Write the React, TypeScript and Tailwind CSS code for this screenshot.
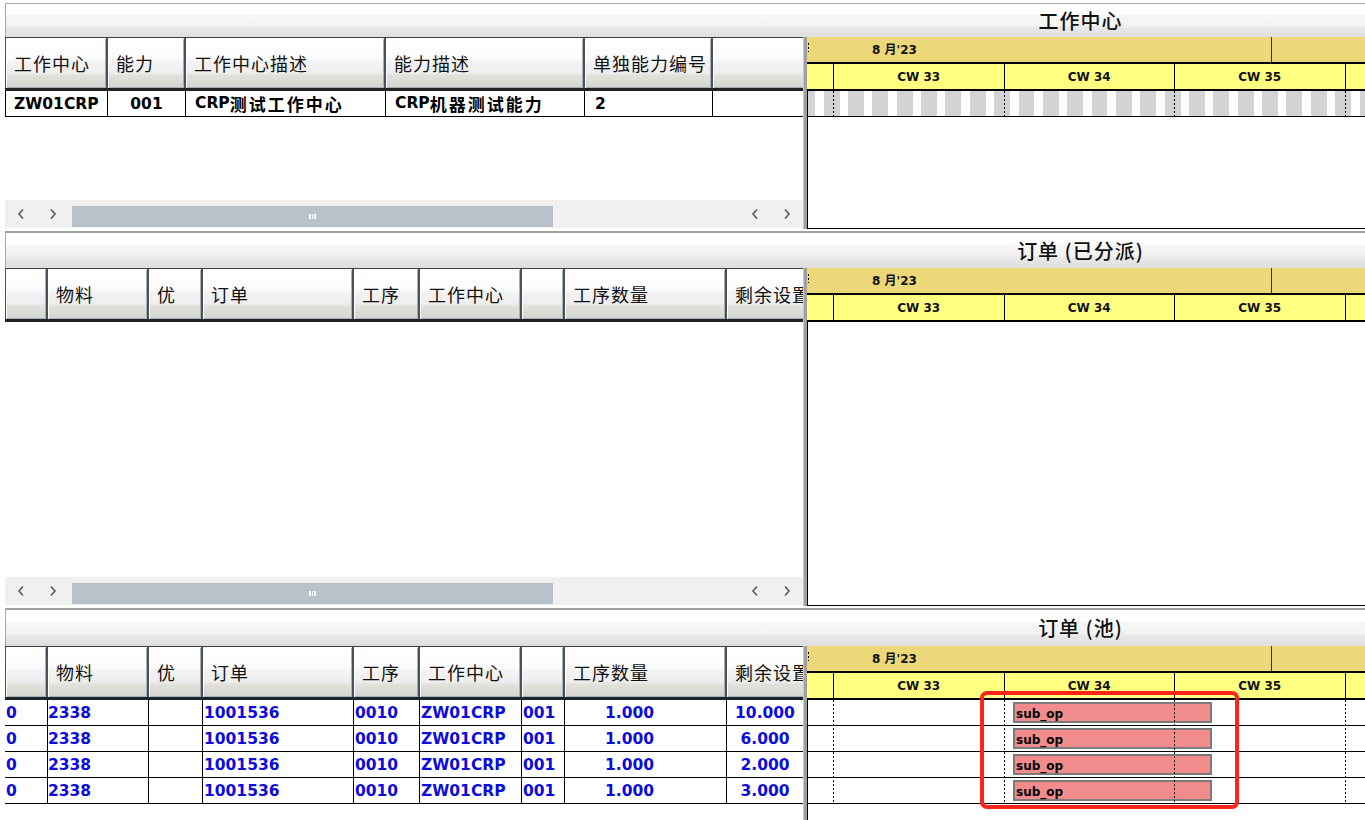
import React from "react";

const WEEK = 170.5;
const DAY = WEEK / 7;
const BX0 = 25; // Monday CW33 offset inside gantt body content

const TITLE_BG =
  "bg-[linear-gradient(to_bottom,#ffffff_0%,#ffffff_33%,#f6f6f6_34%,#f2f2f2_66%,#e9e9e9_70%,#dedede_100%)]";
const HEAD_BG =
  "bg-[linear-gradient(to_bottom,#ffffff_0%,#fcfcfc_42%,#f3f3f3_46%,#eeeeee_70%,#e2e2dd_74%,#d5d5cf_100%)]";
const DOTTED_V =
  "bg-[repeating-linear-gradient(to_bottom,#000000_0px,#000000_2px,transparent_2px,transparent_4px)]";
const CJK = "font-['Noto_Sans_CJK_SC',sans-serif]";

type HCol = { w: string; label: string };

const COLS1: HCol[] = [
  { w: "w-[100px]", label: "工作中心" },
  { w: "w-[76px]", label: "能力" },
  { w: "w-[198px]", label: "工作中心描述" },
  { w: "w-[197px]", label: "能力描述" },
  { w: "w-[126px]", label: "单独能力编号" },
  { w: "w-[200px]", label: "" },
];

const COLS2: HCol[] = [
  { w: "w-[40px]", label: "" },
  { w: "w-[99px]", label: "物料" },
  { w: "w-[52px]", label: "优" },
  { w: "w-[149px]", label: "订单" },
  { w: "w-[64px]", label: "工序" },
  { w: "w-[100px]", label: "工作中心" },
  { w: "w-[41px]", label: "" },
  { w: "w-[160px]", label: "工序数量" },
  { w: "w-[200px]", label: "剩余设置" },
];

const POOL = ["10.000", "6.000", "2.000", "3.000"];

function TitleBar({ title, h }: { title: string; h: string }) {
  return (
    <div className={`${h} ml-[5px] flex shrink-0 border-l border-[#a8a8a8] ${TITLE_BG}`}>
      <div className="w-[790px] shrink-0" />
      <div className={`flex-1 flex items-center justify-center text-[20px] font-medium tracking-[1px] text-[#111] ${CJK}`}>
        {title}
      </div>
    </div>
  );
}

function HeaderRow({ cols }: { cols: HCol[] }) {
  return (
    <div className="flex h-[54px] shrink-0 overflow-hidden bg-[#46525d] border-t border-[#36414b] border-b-[3px] border-b-[#1f2428] pl-[1px] gap-[2px]">
      {cols.map((c, i) => (
        <div
          key={i}
          className={`${c.w} shrink-0 h-full flex items-center pl-[8px] ${HEAD_BG} shadow-[inset_1px_1px_0_#ffffff,inset_-1px_-1px_0_#a7aeb4] text-[18px] tracking-[1px] text-[#111] whitespace-nowrap overflow-hidden ${CJK}`}
        >
          {c.label}
        </div>
      ))}
    </div>
  );
}

function Chevron({ dir }: { dir: "l" | "r" }) {
  return (
    <svg width="8" height="12" viewBox="0 0 8 12">
      <polyline
        points={dir === "l" ? "6,1.5 2,6 6,10.5" : "2,1.5 6,6 2,10.5"}
        fill="none"
        stroke="#555a62"
        strokeWidth="1.6"
      />
    </svg>
  );
}

function ScrollBar() {
  return (
    <div className="h-[28px] shrink-0 bg-[#f0f0f0] flex">
      <div className="w-[32px] flex items-center justify-center">
        <Chevron dir="l" />
      </div>
      <div className="w-[32px] flex items-center justify-center">
        <Chevron dir="r" />
      </div>
      <div className="ml-[3px] mt-[6px] w-[481px] h-[21px] bg-[#b8c2cb] flex items-center justify-center gap-[1px]">
        <span className="w-[1.5px] h-[5px] bg-white" />
        <span className="w-[1.5px] h-[5px] bg-white" />
        <span className="w-[1.5px] h-[5px] bg-white" />
      </div>
      <div className="flex-1" />
      <div className="w-[32px] flex items-center justify-center">
        <Chevron dir="l" />
      </div>
      <div className="w-[32px] flex items-center justify-center">
        <Chevron dir="r" />
      </div>
    </div>
  );
}

function GanttHeader() {
  return (
    <div className="shrink-0 text-[12px] font-bold text-[#111]">
      <div className="relative flex h-[27px] bg-[#ecd878] border-b-2 border-black">
        <div className="w-[464px] shrink-0 flex items-center pl-[65px]">8 月'23</div>
        <div className="flex-1 border-l border-[#333333]" />
        <div className={`absolute left-[1px] top-[6px] h-[9px] w-[1px] ${DOTTED_V}`} />
      </div>
      <div className="flex h-[27px] bg-[#ffff80] border-b-2 border-black">
        <div className="w-[26px] shrink-0" />
        {["CW 33", "CW 34", "CW 35"].map((w) => (
          <div key={w} className="w-[170.5px] shrink-0 border-l border-black flex items-center justify-center pt-[1px]">
            {w}
          </div>
        ))}
        <div className="flex-1 border-l border-black" />
      </div>
    </div>
  );
}

function WeekLines() {
  return (
    <>
      {[0, 1, 2, 3].map((k) => (
        <div
          key={k}
          className={`absolute top-0 h-full w-[1px] ${DOTTED_V}`}
          style={{ left: BX0 + k * WEEK }}
        />
      ))}
    </>
  );
}

function Stripes() {
  const days = Array.from({ length: 26 }, (_, i) => i - 2);
  return (
    <div className="relative h-[26px] border-b border-black bg-[#d3d3d3] overflow-hidden">
      {days.map((d) => (
        <div
          key={d}
          className="absolute top-0 h-full w-[8.5px] bg-white"
          style={{ left: BX0 + d * DAY + 6.5 }}
        />
      ))}
      <WeekLines />
    </div>
  );
}

function PanelBody({
  h,
  left,
  right,
  bottomBorder,
}: {
  h: string;
  left: React.ReactNode;
  right: React.ReactNode;
  bottomBorder: boolean;
}) {
  return (
    <div className={`${h} ml-[5px] flex shrink-0`}>
      <div className="w-[798px] shrink-0 flex flex-col overflow-hidden">{left}</div>
      <div className="w-[4px] shrink-0 bg-[#a0a0a0] border-l border-[#c8c8c8]" />
      <div className="flex-1 flex flex-col overflow-hidden">
        <GanttHeader />
        <div className={`flex-1 relative border-l border-black ${bottomBorder ? "border-b" : ""}`}>{right}</div>
      </div>
    </div>
  );
}

function Divider() {
  return (
    <>
      <div className="h-[2px] shrink-0" />
      <div className="h-[2px] shrink-0 ml-[5px] bg-[#a0a0a0]" />
    </>
  );
}

function CjkBold({ children }: { children: React.ReactNode }) {
  return <span className={`text-[17px] tracking-[2px] ${CJK}`}>{children}</span>;
}

export default function App() {
  return (
    <div className="relative w-[1365px] h-[820px] overflow-hidden bg-white flex flex-col font-['DejaVu_Sans','Noto_Sans_CJK_SC',sans-serif]">
      <div className="h-[3px] shrink-0" />
      <div className="ml-[5px] h-[1px] shrink-0 bg-[#a8a8a8]" />
      <TitleBar title="工作中心" h="h-[33px]" />
      <PanelBody
        h="h-[192px]"
        bottomBorder
        left={
          <>
            <HeaderRow cols={COLS1} />
            <div className="flex h-[26px] shrink-0 border-b border-black text-[15.5px] font-bold text-black">
              <div className="w-[103px] shrink-0 border-l border-r border-black flex items-center pl-[8px] pt-[2px]">ZW01CRP</div>
              <div className="w-[78px] shrink-0 border-r border-black flex items-center justify-center pt-[2px]">001</div>
              <div className="w-[200px] shrink-0 border-r border-black flex items-center pl-[9px] whitespace-nowrap">
                CRP<CjkBold>测试工作中心</CjkBold>
              </div>
              <div className="w-[199px] shrink-0 border-r border-black flex items-center pl-[9px] whitespace-nowrap">
                CRP<CjkBold>机器测试能力</CjkBold>
              </div>
              <div className="w-[128px] shrink-0 border-r border-black flex items-center pl-[10px] pt-[2px]">2</div>
              <div className="flex-1" />
            </div>
            <div className="flex-1" />
            <ScrollBar />
            <div className="h-[1px] shrink-0" />
          </>
        }
        right={<Stripes />}
      />
      <Divider />
      <TitleBar title="订单 (已分派)" h="h-[35px]" />
      <PanelBody
        h="h-[338px]"
        bottomBorder
        left={
          <>
            <HeaderRow cols={COLS2} />
            <div className="flex-1" />
            <ScrollBar />
            <div className="h-[1px] shrink-0" />
          </>
        }
        right={null}
      />
      <Divider />
      <TitleBar title="订单 (池)" h="h-[36px]" />
      <PanelBody
        h="flex-1"
        bottomBorder={false}
        left={
          <>
            <HeaderRow cols={COLS2} />
            {POOL.map((q, i) => (
              <div key={i} className="flex h-[26px] shrink-0 border-b border-black text-[15.5px] font-bold text-[#0c0cdc]">
                <div className="w-[43px] shrink-0 border-r border-black flex items-center pl-[1px] pt-[2px]">0</div>
                <div className="w-[101px] shrink-0 border-r border-black flex items-center pt-[2px]">2338</div>
                <div className="w-[54px] shrink-0 border-r border-black" />
                <div className="w-[151px] shrink-0 border-r border-black flex items-center pl-[1px] pt-[2px]">1001536</div>
                <div className="w-[66px] shrink-0 border-r border-black flex items-center pl-[1px] pt-[2px]">0010</div>
                <div className="w-[102px] shrink-0 border-r border-black flex items-center pl-[1px] pt-[2px]">ZW01CRP</div>
                <div className="w-[43px] shrink-0 border-r border-black flex items-center pl-[1px] pt-[2px]">001</div>
                <div className="w-[162px] shrink-0 border-r border-black flex items-center pl-[40px] pt-[2px]">1.000</div>
                <div className="w-[76px] shrink-0 flex items-center justify-center pt-[2px]">{q}</div>
              </div>
            ))}
          </>
        }
        right={
          <div className="relative">
            {POOL.map((q, i) => (
              <div key={i} className="relative h-[26px] border-b border-black">
                <div className="absolute left-[205px] top-[2px] h-[21px] w-[199px] bg-[#f28c8c] border-2 border-[#7b7b7b] flex items-center pl-[1px] pt-[2px] text-[12px] font-bold text-black leading-none">
                  sub_op
                </div>
              </div>
            ))}
            <WeekLines />
          </div>
        }
      />
      <div className="absolute left-[980px] top-[691px] w-[259px] h-[118px] border-4 border-[#ff2418] rounded-[7px]" />
    </div>
  );
}
